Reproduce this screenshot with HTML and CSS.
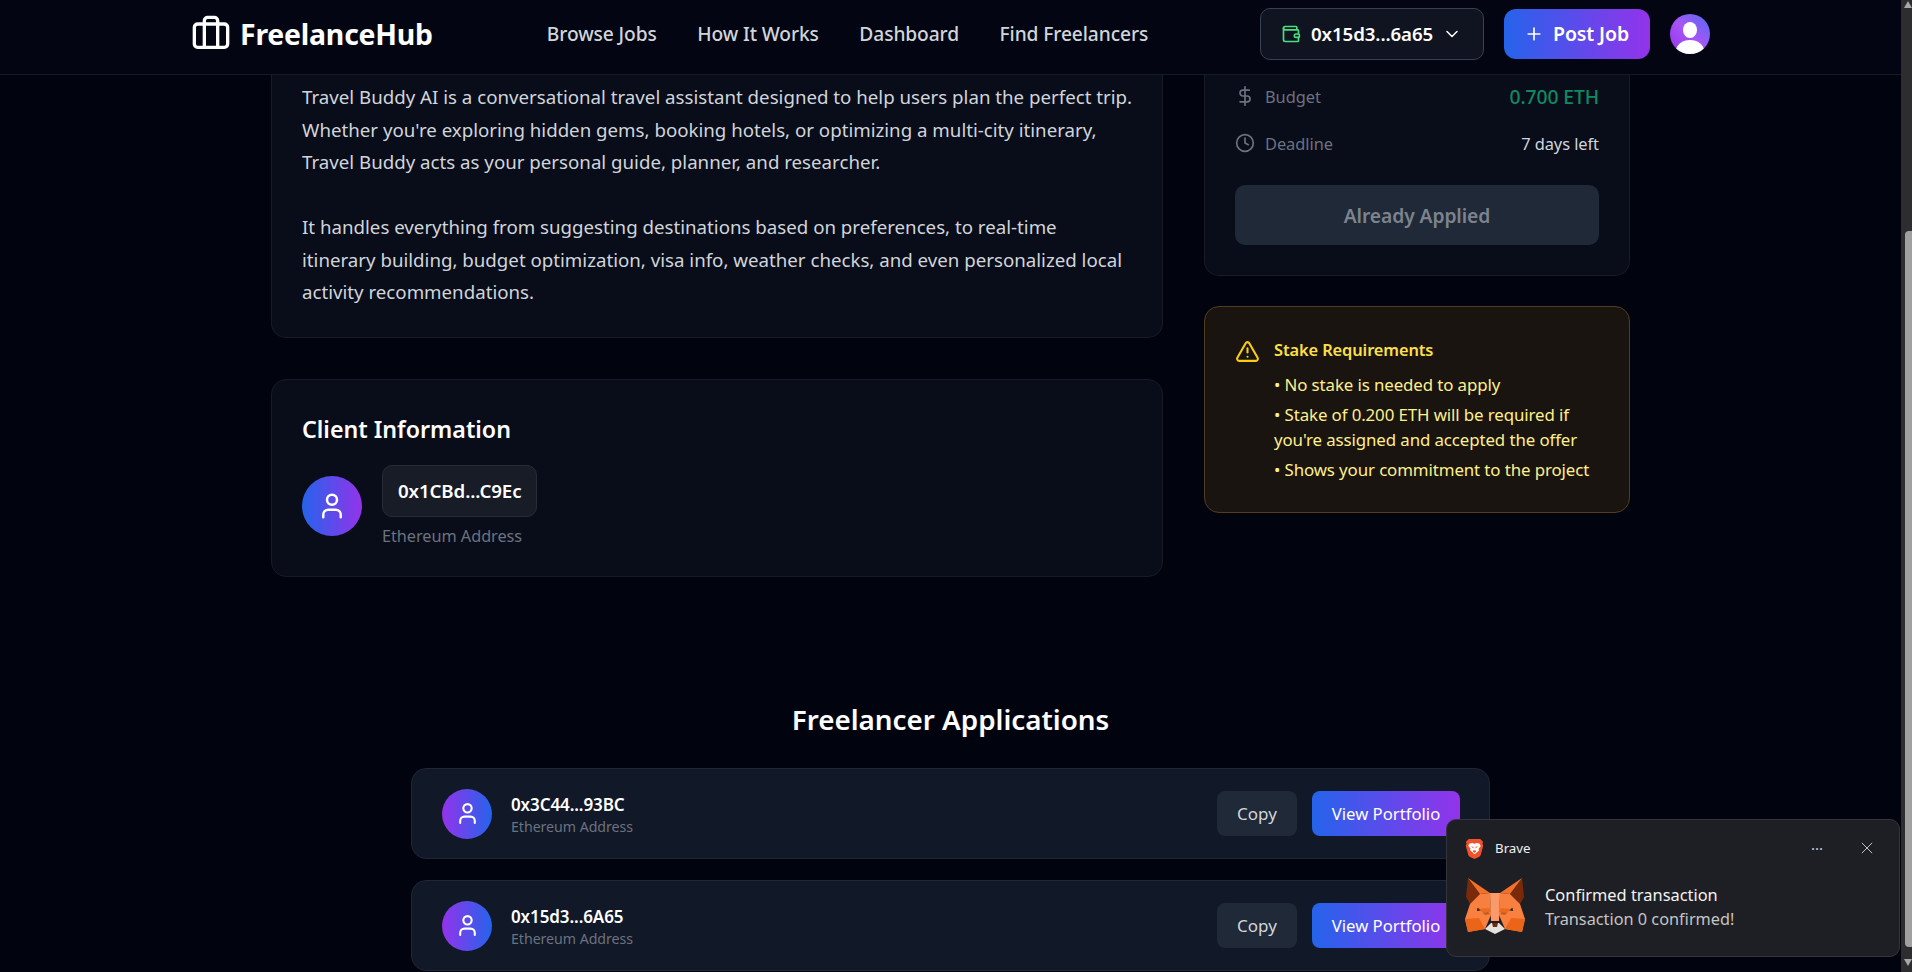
FILE: index.html
```html
<!DOCTYPE html>
<html lang="en">
<head>
<meta charset="utf-8">
<title>FreelanceHub</title>
<link rel="stylesheet" href="styles.css">
</head>
<body>
<header class="topbar">
  <a class="brand">
    <svg class="brand-icon" viewBox="0 0 24 24"><path d="M16 20V4a2 2 0 0 0-2-2h-4a2 2 0 0 0-2 2v16"/><rect width="20" height="14" x="2" y="6" rx="2"/></svg>
    <span>FreelanceHub</span>
  </a>
  <nav class="nav">
    <a>Browse Jobs</a><a>How It Works</a><a>Dashboard</a><a>Find Freelancers</a>
  </nav>
  <div class="actions">
    <button class="wallet">
      <svg class="wallet-icon" viewBox="0 0 24 24"><path d="M19 7V4a1 1 0 0 0-1-1H5a2 2 0 0 0 0 4h15a1 1 0 0 1 1 1v4h-3a2 2 0 0 0 0 4h3a1 1 0 0 0 1-1v-2a1 1 0 0 0-1-1"/><path d="M3 5v14a2 2 0 0 0 2 2h15a1 1 0 0 0 1-1v-4"/></svg>
      <span>0x15d3...6a65</span>
      <svg class="chev" viewBox="0 0 24 24"><path d="m6 9 6 6 6-6"/></svg>
    </button>
    <button class="post">
      <svg class="plus" viewBox="0 0 24 24"><path d="M5 12h14M12 5v14"/></svg>
      <span>Post Job</span>
    </button>
    <div class="me">
      <svg viewBox="0 0 40 40"><ellipse cx="20" cy="16" rx="7" ry="8" fill="#fff"/><ellipse cx="20" cy="37" rx="14" ry="11" fill="#fff"/></svg>
    </div>
  </div>
</header>

<main class="page">
  <div class="detail">
    <div class="col-main">
      <section class="card desc">
        <p>Travel Buddy AI is a conversational travel assistant designed to help users plan the perfect trip. Whether you're exploring hidden gems, booking hotels, or optimizing a multi-city itinerary, Travel Buddy acts as your personal guide, planner, and researcher.</p>
        <p>It handles everything from suggesting destinations based on preferences, to real-time itinerary building, budget optimization, visa info, weather checks, and even personalized local activity recommendations.</p>
      </section>
      <section class="card client">
        <h2>Client Information</h2>
        <div class="client-row">
          <div class="avatar avatar-lg"><svg viewBox="0 0 24 24"><path d="M19 21v-2a4 4 0 0 0-4-4H9a4 4 0 0 0-4 4v2"/><circle cx="12" cy="7" r="4"/></svg></div>
          <div class="client-id">
            <div class="chip">0x1CBd...C9Ec</div>
            <div class="muted">Ethereum Address</div>
          </div>
        </div>
      </section>
    </div>
    <aside class="col-side">
      <section class="card summary">
        <div class="row">
          <span class="row-label"><svg class="ico" viewBox="0 0 24 24"><path d="M12 1v22"/><path d="M17 5H9.5a3.5 3.5 0 0 0 0 7h5a3.5 3.5 0 0 1 0 7H6"/></svg>Budget</span>
          <span class="budget">0.700 ETH</span>
        </div>
        <div class="row">
          <span class="row-label"><svg class="ico" viewBox="0 0 24 24"><circle cx="12" cy="12" r="10"/><path d="M12 6v6l4 2"/></svg>Deadline</span>
          <span class="days">7 days left</span>
        </div>
        <button class="applied">Already Applied</button>
      </section>
      <section class="stake">
        <svg class="warn" viewBox="0 0 24 24"><path d="m21.73 18-8-14a2 2 0 0 0-3.48 0l-8 14A2 2 0 0 0 4 21h16a2 2 0 0 0 1.73-3Z"/><path d="M12 9v4"/><path d="M12 17h.01"/></svg>
        <div>
          <h3>Stake Requirements</h3>
          <ul>
            <li>• No stake is needed to apply</li>
            <li>• Stake of 0.200 ETH will be required if you're assigned and accepted the offer</li>
            <li>• Shows your commitment to the project</li>
          </ul>
        </div>
      </section>
    </aside>
  </div>

  <section class="apps">
    <h2>Freelancer Applications</h2>
    <div class="app">
      <div class="avatar avatar-md"><svg viewBox="0 0 24 24"><path d="M19 21v-2a4 4 0 0 0-4-4H9a4 4 0 0 0-4 4v2"/><circle cx="12" cy="7" r="4"/></svg></div>
      <div class="app-id"><div class="addr">0x3C44...93BC</div><div class="sub">Ethereum Address</div></div>
      <button class="copy">Copy</button>
      <button class="view">View Portfolio</button>
    </div>
    <div class="app">
      <div class="avatar avatar-md"><svg viewBox="0 0 24 24"><path d="M19 21v-2a4 4 0 0 0-4-4H9a4 4 0 0 0-4 4v2"/><circle cx="12" cy="7" r="4"/></svg></div>
      <div class="app-id"><div class="addr">0x15d3...6A65</div><div class="sub">Ethereum Address</div></div>
      <button class="copy">Copy</button>
      <button class="view">View Portfolio</button>
    </div>
  </section>
</main>

<div class="scrollbar"><i class="arrow up"></i><b class="thumb"></b><i class="arrow down"></i></div>

<aside class="toast">
  <div class="toast-head">
    <svg class="brave" viewBox="0 0 20 22">
      <path d="M4 1h12l3 3-.6 2 .8 2.2-2.6 9.3c-.4 1.2-1 1.8-2 2.4L10 22l-4.6-2.1c-1-.6-1.6-1.2-2-2.4L.8 8.2 1.6 6 1 4z" fill="#f0522b"/>
      <path d="M4.5 6l3-.8 2.5.8 2.5-.8 3 .8 1 2.6-2.3 3 .6 1.6-2.2 1.8L10 17l-2.6-2.5-2.2-1.8.6-1.6-2.3-3z" fill="#fff"/>
      <path d="M7 9l2 1.2M13 9l-2 1.2M8.5 13.5h3L10 15.2z" fill="#f0522b" stroke="#f0522b"/>
    </svg>
    <span class="toast-app">Brave</span>
    <span class="dots">···</span>
    <svg class="close" viewBox="0 0 14 14"><path d="M1 1l12 12M13 1L1 13"/></svg>
  </div>
  <div class="toast-body">
    <svg class="fox" viewBox="0 0 60 60">
      <polygon points="3,1 15,17 5,27 1,20" fill="#7a2a08"/>
      <polygon points="57,1 45,17 55,27 59,20" fill="#7a2a08"/>
      <polygon points="3,1 25,16 15,17" fill="#f2702a"/>
      <polygon points="57,1 35,16 45,17" fill="#f2702a"/>
      <polygon points="15,17 25,16 26,38 5,27" fill="#f8803f"/>
      <polygon points="45,17 35,16 34,38 55,27" fill="#f8803f"/>
      <polygon points="25,16 35,16 34,44 26,44" fill="#fb9a68"/>
      <polygon points="5,27 13,27 12,34 24,32 26,38 20,52 3,55 0,42" fill="#f9803e"/>
      <polygon points="55,27 47,27 48,34 36,32 34,38 40,52 57,55 60,42" fill="#f9803e"/>
      <polygon points="0,42 14,41 20,52 3,55" fill="#ea6518"/>
      <polygon points="60,42 46,41 40,52 57,55" fill="#ea6518"/>
      <polygon points="14,32 24,31 26,35 18,36" fill="#ea6a20"/>
      <polygon points="46,32 36,31 34,35 42,36" fill="#ea6a20"/>
      <polygon points="18,36 23,35 25,37 20,38" fill="#c45a1c"/>
      <polygon points="42,36 37,35 35,37 40,38" fill="#c45a1c"/>
      <polygon points="20,52 26,46 34,46 40,52 30,57" fill="#e5e1dc"/>
      <polygon points="27,46 33,46 32,50 28,50" fill="#6d2c10"/>
    </svg>
    <div>
      <div class="toast-title">Confirmed transaction</div>
      <div class="toast-msg">Transaction 0 confirmed!</div>
    </div>
  </div>
</aside>
</body>
</html>
```
FILE: styles.css
```css
* { box-sizing: border-box; }
html, body { margin: 0; height: 972px; overflow: hidden; }
body {
  padding-right: 11px;
  background: #01030f;
  color: #fff;
  font-family: "Noto Sans", "Open Sans", sans-serif;
}
button { font-family: inherit; border: 0; cursor: pointer; }
h2, h3, p, ul { margin: 0; padding: 0; }

.topbar {
  height: 75px;
  padding: 0 191px 7px 191px;
  display: flex;
  align-items: center;
  background: #030612;
  border-bottom: 1px solid #151a26;
}
.brand { display: flex; align-items: center; gap: 9px; font-size: 28.4px; font-weight: 700; letter-spacing: -.2px; }
.brand-icon { width: 40px; height: 40px; fill: none; stroke: #fff; stroke-width: 2; stroke-linecap: round; stroke-linejoin: round; }
.nav { display: flex; gap: 40.5px; margin-left: 114px; font-size: 19.2px; font-weight: 500; color: #d1d5db; letter-spacing: -.1px; }
.actions { margin-left: auto; display: flex; align-items: center; }

.wallet {
  width: 224px; height: 52px; padding: 0 0 0 20px;
  display: flex; align-items: center;
  background: #0f1420; color: #fff;
  border: 1px solid #374151; border-radius: 10px;
  font-size: 18.7px; font-weight: 600; letter-spacing: -.1px;
}
.wallet-icon { width: 20px; height: 20px; margin-right: 10px; fill: none; stroke: #4ade80; stroke-width: 2; stroke-linecap: round; stroke-linejoin: round; }
.chev { width: 20px; height: 20px; margin-left: 9px; fill: none; stroke: #fff; stroke-width: 1.8; stroke-linecap: round; stroke-linejoin: round; }
.post {
  width: 146px; height: 50px; margin-left: 20px; padding: 0 0 0 20px;
  display: flex; align-items: center; gap: 9px;
  background: linear-gradient(90deg, #2563eb, #9333ea);
  color: #fff; border-radius: 12px;
  font-size: 19.5px; font-weight: 600; letter-spacing: -.1px;
}
.plus { width: 20px; height: 20px; fill: none; stroke: #fff; stroke-width: 2; stroke-linecap: round; }
.me {
  width: 40px; height: 40px; margin-left: 20px; border-radius: 50%; overflow: hidden;
  background: linear-gradient(45deg, #9333ea, #a855f7 50%, #4f6cf0);
}
.me svg { display: block; }

.page { display: flex; flex-direction: column; align-items: center; }
.detail { width: 1359px; display: grid; grid-template-columns: 892px 426px; column-gap: 41px; align-items: start; }
.col-main { display: flex; flex-direction: column; gap: 41px; }
.col-side { display: flex; flex-direction: column; gap: 30px; }

.card { background: #090d19; border: 1px solid #171c28; border-radius: 15px; }
.desc, .summary { border-top: 0; border-top-left-radius: 0; border-top-right-radius: 0; }
.desc { padding: 6px 28px 28.5px 30px; font-size: 18.7px; line-height: 32.5px; color: #d1d5db; }
.desc p + p { margin-top: 32.5px; }

.client { height: 198px; padding: 30px; }
.client h2 { font-size: 23.2px; line-height: 38px; font-weight: 600; }
.client-row { display: flex; align-items: center; gap: 20px; margin-top: 17px; }
.avatar { display: flex; align-items: center; justify-content: center; border-radius: 50%; flex: none; }
.avatar svg { fill: none; stroke: #fff; stroke-width: 2; stroke-linecap: round; stroke-linejoin: round; }
.avatar-lg { width: 60px; height: 60px; background: linear-gradient(90deg, #2563eb, #9333ea); }
.avatar-lg svg { width: 30px; height: 30px; }
.avatar-md { width: 50px; height: 50px; background: linear-gradient(90deg, #9333ea, #2563eb); }
.avatar-md svg { width: 25px; height: 25px; }
.chip {
  display: inline-block; height: 52px; padding: 0 15px; line-height: 50px;
  background: #171c27; border: 1px solid #262b37; border-radius: 10px;
  font-size: 18.7px; font-weight: 600; letter-spacing: -.1px;
}
.muted { font-size: 16.3px; line-height: 22px; margin-top: 8px; color: #6b7280; letter-spacing: -.05px; }

.summary { height: 201px; padding: 0 30px; }
.row { display: flex; justify-content: space-between; align-items: center; height: 42px; font-size: 16.4px; letter-spacing: -.05px; }
.row + .row { margin-top: 5px; }
.row-label { display: flex; align-items: center; gap: 10px; color: #6b7280; }
.ico { width: 20px; height: 20px; fill: none; stroke: #6b7280; stroke-width: 2; stroke-linecap: round; stroke-linejoin: round; }
.budget { color: #0f8a62; font-size: 19.3px; font-weight: 500; letter-spacing: -.1px; }
.days { color: #d1d5db; }
.applied {
  display: block; width: 100%; height: 60px; margin-top: 21px;
  background: #1f2937; color: #7d838e; border-radius: 10px;
  font-size: 19.3px; font-weight: 600; letter-spacing: -.1px;
}

.stake {
  height: 207px; padding: 30px 20px 0 30px;
  display: flex; gap: 14px;
  background: #1a1410; border: 1px solid #543d1f; border-radius: 15px;
  color: #fef08a;
}
.warn { width: 25px; height: 25px; margin-top: 2px; flex: none; fill: none; stroke: #facc15; stroke-width: 2; stroke-linecap: round; stroke-linejoin: round; }
.stake h3 { font-size: 16.4px; line-height: 25px; font-weight: 600; color: #fde047; letter-spacing: -.1px; }
.stake ul { list-style: none; margin-top: 10px; font-size: 16.85px; line-height: 25px; letter-spacing: -.1px; }
.stake li + li { margin-top: 5px; }

.apps { width: 1079px; margin-top: 122px; }
.apps h2 { text-align: center; font-size: 27.8px; line-height: 40px; font-weight: 600; margin-bottom: 29px; }
.app {
  height: 91px; padding: 0 29px 0 30px;
  display: flex; align-items: center;
  background: #111827; border: 1px solid #1f2733; border-radius: 15px;
}
.app + .app { margin-top: 21px; }
.app-id { margin-left: 19px; margin-right: auto; padding-top: 2px; }
.addr { font-size: 17px; line-height: 24px; font-weight: 600; letter-spacing: -.1px; }
.sub { font-size: 14.2px; line-height: 20px; color: #6b7280; letter-spacing: -.05px; }
.copy, .view { height: 45px; border-radius: 8px; font-size: 16.7px; }
.copy { width: 80px; font-size: 17px; background: #1f2937; color: #d1d5db; }
.view { width: 148px; margin-left: 15px; background: linear-gradient(90deg, #2563eb, #9333ea); color: #fff; }

.scrollbar {
  position: fixed; top: 0; right: 0; width: 11px; height: 972px;
  background: #2d2d2f;
}
.thumb { position: absolute; top: 231px; bottom: 25px; left: 4px; right: 0; background: #a0a0a0; border-radius: 4px 0 0 4px; }
.arrow { position: absolute; right: 0; width: 0; height: 0; border-left: 4px solid transparent; border-right: 4px solid transparent; }
.arrow.up { top: 1px; border-bottom: 7px solid #a8a8a8; }
.arrow.down { bottom: 6px; border-top: 7px solid #a8a8a8; }

.toast {
  position: fixed; left: 1446px; top: 819px; width: 454px; height: 138px;
  padding: 0 20px 0 18px;
  background: #1e1f24; border: 1px solid #34353a; border-radius: 10px;
}
.toast-head { height: 56px; display: flex; align-items: center; }
.brave { width: 19px; height: 21px; }
.toast-app { margin-left: 11px; font-size: 13.3px; color: #f0f0f0; }
.dots { margin-left: auto; font-size: 15px; color: #ccc; }
.close { width: 12px; height: 12px; margin: 0 6px 0 38px; fill: none; stroke: #ddd; stroke-width: 1; }
.toast-body { display: flex; align-items: center; gap: 20px; margin-top: 1px; }
.fox { width: 60px; height: 60px; flex: none; }
.toast-title { font-size: 16.4px; line-height: 24px; color: #f3f3f3; }
.toast-msg { font-size: 16.3px; line-height: 24px; color: #c4c4c4; }
```
